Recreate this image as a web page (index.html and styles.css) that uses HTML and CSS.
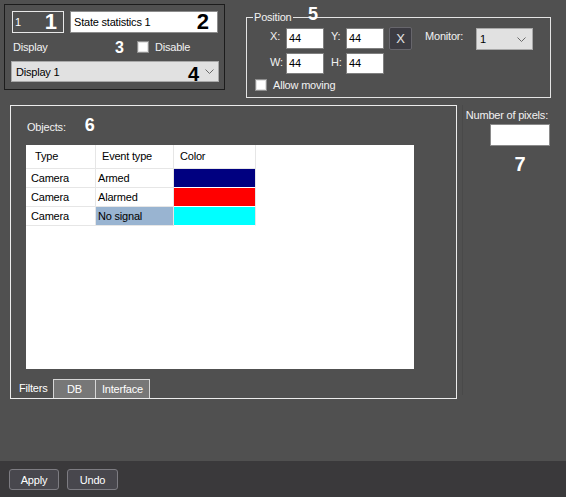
FILE: index.html
```html
<!DOCTYPE html>
<html lang="en">
  <head>
    <meta charset="UTF-8" />
    <meta name="viewport" content="width=device-width, initial-scale=1.0" />
    <title>State statistics</title>
    <link rel="stylesheet" href="styles.css">
  </head>
  <body>
    <div class="window">
      <div class="top">
        <div class="ident">
          <div class="ident__row">
            <div class="field field--id">1<span class="mark mark--lg">1</span></div>
            <div class="field field--name">State statistics 1<span class="mark mark--lg mark--dark">2</span></div>
          </div>
          <div class="ident__row ident__row--display">
            <span class="display-label">Display</span>
            <span class="mark-cell"><span class="mark mark--sm">3</span></span>
            <span class="check"></span>
            <span class="check-label">Disable</span>
          </div>
          <div class="combo combo--display">
            <span>Display 1</span>
            <span class="mark mark--md mark--dark mark--combo">4</span>
            <svg class="chevron" width="9" height="5" viewBox="0 0 9 5"><path d="M0.5 0.5 L4.5 4.5 L8.5 0.5" fill="none" stroke="#6a6a6a" stroke-width="1"/></svg>
          </div>
        </div>

        <div class="position">
          <span class="position__legend">Position</span>
          <span class="mark mark--pos">5</span>
          <div class="position__row position__row--main">
            <span class="coord-label">X:</span>
            <div class="num">44</div>
            <span class="coord-label coord-label--second">Y:</span>
            <div class="num">44</div>
            <button class="reset">X</button>
            <span class="monitor-label">Monitor:</span>
            <div class="combo combo--monitor">
              <span>1</span>
              <svg class="chevron" width="9" height="5" viewBox="0 0 9 5"><path d="M0.5 0.5 L4.5 4.5 L8.5 0.5" fill="none" stroke="#6a6a6a" stroke-width="1"/></svg>
            </div>
          </div>
          <div class="position__row position__row--size">
            <span class="coord-label">W:</span>
            <div class="num">44</div>
            <span class="coord-label coord-label--second">H:</span>
            <div class="num">44</div>
          </div>
          <div class="position__row position__row--moving">
            <span class="check"></span>
            <span class="check-label">Allow moving</span>
          </div>
        </div>
      </div>

      <div class="middle">
        <div class="objects">
          <div class="objects__head">
            <span>Objects:</span>
            <span class="mark mark--six">6</span>
          </div>
          <div class="grid">
            <table class="events">
              <colgroup>
                <col class="col-type">
                <col class="col-event">
                <col class="col-color">
              </colgroup>
              <tr>
                <th>Type</th>
                <th>Event type</th>
                <th>Color</th>
              </tr>
              <tr>
                <td>Camera</td>
                <td>Armed</td>
                <td class="swatch swatch--armed"></td>
              </tr>
              <tr>
                <td>Camera</td>
                <td>Alarmed</td>
                <td class="swatch swatch--alarmed"></td>
              </tr>
              <tr>
                <td>Camera</td>
                <td class="selected">No signal</td>
                <td class="swatch swatch--nosignal"></td>
              </tr>
            </table>
          </div>
          <div class="tabs">
            <span class="tab tab--active">Filters</span>
            <span class="tab tab--db">DB</span>
            <span class="tab tab--interface">Interface</span>
          </div>
        </div>
        <div class="splitter"></div>
        <div class="pixels">
          <span class="pixels__label">Number of pixels:</span>
          <div class="pixels__input"></div>
          <div class="mark mark--seven">7</div>
        </div>
      </div>

      <div class="footer">
        <button class="btn">Apply</button>
        <button class="btn btn--undo">Undo</button>
      </div>
    </div>
  </body>
</html>
```

FILE: styles.css
```css
* {
  margin: 0;
  padding: 0;
  box-sizing: border-box;
}
body {
  background-color: #505050;
  font-family: "Liberation Sans", Arial, sans-serif;
  font-size: 11px;
  letter-spacing: -0.2px;
  color: #f2f2f2;
}
.window {
  height: 497px;
  display: flex;
  flex-direction: column;
  overflow: hidden;
}

/* numbered callouts */
.mark {
  font-weight: bold;
  color: #fff;
  letter-spacing: 0;
}
.mark--dark {
  color: #000;
}
.mark--lg {
  font-size: 22px;
  line-height: 22px;
}
.mark--md {
  font-size: 20px;
  line-height: 20px;
}
.mark--sm {
  font-size: 16px;
  line-height: 16px;
}

/* top row */
.top {
  display: flex;
  align-items: flex-start;
  padding: 4px 0 0 4px;
}
.ident {
  width: 221px;
  height: 86px;
  border: 1px solid #1c1c1c;
  padding: 6px 0 0 6px;
}
.ident__row {
  display: flex;
}
.field {
  height: 22px;
  display: flex;
  align-items: center;
  justify-content: space-between;
  line-height: 13px;
}
.field--id {
  width: 52px;
  margin-left: 1px;
  border: 1px solid #e8e8e8;
  padding: 0 6px 0 2px;
  color: #fff;
}
.field--name {
  width: 148px;
  margin-left: 6px;
  background-color: #fff;
  border: 1px solid #8c8c8c;
  padding: 0 8px 0 3px;
  color: #000;
}
.ident__row--display {
  height: 28px;
  align-items: center;
}
.display-label {
  width: 104px;
  padding-left: 2px;
}
.mark-cell {
  width: 22px;
  display: flex;
  margin-top: 2px;
}
.check {
  width: 12px;
  height: 12px;
  background-color: #fff;
  border: 1px solid #8e8e8e;
  box-shadow: inset 0 0 0 1px #e2e2e2;
}
.check-label {
  margin-left: 6px;
}
.combo {
  display: flex;
  align-items: center;
  background-color: #e1e1e1;
  border: 1px solid #a9a9a9;
  color: #000;
}
.combo--display {
  width: 208px;
  height: 21px;
  padding: 0 4px 0 4px;
}
.mark--combo {
  margin-left: auto;
  margin-top: 4px;
}
.chevron {
  margin-left: 6px;
  flex-shrink: 0;
}

.position {
  position: relative;
  width: 305px;
  height: 81px;
  margin: 13px 0 0 21px;
  border: 1px solid #e4e4e4;
  padding-top: 9px;
}
.position__legend {
  position: absolute;
  left: 6px;
  top: -7px;
  padding: 0 1px;
  line-height: 13px;
  background-color: #505050;
}
.mark--pos {
  position: absolute;
  left: 61px;
  top: -13px;
  font-size: 18px;
  line-height: 18px;
}
.position__row {
  display: flex;
  align-items: flex-start;
  padding-left: 23px;
}
.position__row--main {
  height: 23px;
}
.position__row--main .num {
  margin-top: 1px;
}
.position__row--size {
  margin-top: 3px;
}
.position__row--moving {
  margin-top: 4px;
  height: 14px;
  align-items: center;
  padding-left: 8px;
}
.coord-label {
  width: 16px;
  margin-top: 3px;
  line-height: 13px;
}
.coord-label--second {
  width: 15px;
  margin-left: 7px;
}
.num {
  width: 38px;
  height: 21px;
  background-color: #fff;
  border: 1px solid #7f7f7f;
  color: #000;
  padding-left: 2px;
  line-height: 19px;
}
.reset {
  width: 23px;
  height: 23px;
  margin-left: 5px;
  background-color: #3c3b42;
  border: 1px solid #67666c;
  border-radius: 2px;
  color: #e4e4e4;
  font-family: inherit;
  font-size: 13px;
}
.monitor-label {
  width: 51px;
  margin: 3px 0 0 13px;
  line-height: 13px;
}
.combo--monitor {
  width: 57px;
  height: 22px;
  margin-top: 1px;
  padding: 0 6px 0 3px;
  justify-content: space-between;
}

/* objects */
.middle {
  flex: 1;
  display: flex;
  align-items: flex-start;
  padding-top: 7px;
}
.objects {
  width: 447px;
  height: 294px;
  margin-left: 10px;
  border: 1px solid #ececec;
  display: flex;
  flex-direction: column;
}
.objects__head {
  height: 39px;
  padding: 10px 0 0 16px;
  display: flex;
  align-items: baseline;
  line-height: 13px;
}
.mark--six {
  margin-left: 19px;
  font-size: 18px;
  line-height: 18px;
}
.grid {
  width: 388px;
  height: 224px;
  margin-left: 15px;
  background-color: #fff;
}
.events {
  table-layout: fixed;
  width: 230px;
  border-collapse: separate;
  border-spacing: 0;
  color: #000;
}
.col-type {
  width: 70px;
}
.col-event {
  width: 78px;
}
.col-color {
  width: 82px;
}
.events th,
.events td {
  border-right: 1px solid #e6e6e6;
  border-bottom: 1px solid #e6e6e6;
  text-align: left;
  font-weight: normal;
  white-space: nowrap;
  line-height: 13px;
}
.events th {
  height: 24px;
  padding-left: 6px;
}
.events th:first-child {
  padding-left: 9px;
}
.events td {
  height: 19px;
  padding-left: 2px;
}
.events td:first-child {
  padding-left: 5px;
}
.events .selected {
  background-color: #99b4d1;
}
.events .swatch {
  border-bottom-color: #fff;
}
.swatch--armed {
  background-color: #000080;
}
.swatch--alarmed {
  background-color: #ff0000;
}
.swatch--nosignal {
  background-color: #00ffff;
}
.tabs {
  margin-top: 10px;
  height: 19px;
  display: flex;
  align-items: flex-end;
}
.tab {
  height: 19px;
  line-height: 18px;
  text-align: center;
  color: #fff;
}
.tab--active {
  width: 42px;
  padding-left: 8px;
  text-align: left;
}
.tab--db,
.tab--interface {
  background-color: #777;
  border: 1px solid #d6d6d6;
  border-bottom: none;
}
.tab--db {
  width: 43px;
}
.tab--interface {
  width: 54px;
  border-left: none;
}

.splitter {
  width: 1px;
  height: 290px;
  margin-left: 5px;
  background-color: #494949;
}
.pixels {
  flex: 1;
  display: flex;
  flex-direction: column;
  align-items: flex-end;
  padding: 4px 16px 0 0;
}
.pixels__label {
  line-height: 13px;
  margin-right: 2px;
}
.pixels__input {
  width: 60px;
  height: 22px;
  margin-top: 2px;
  background-color: #fff;
  border: 1px solid #8a8a8a;
}
.mark--seven {
  width: 60px;
  margin-top: 8px;
  text-align: center;
  font-size: 20px;
  line-height: 20px;
}

/* footer */
.footer {
  height: 36px;
  background-color: #3a393b;
  padding: 8px 0 0 9px;
  display: flex;
  align-items: flex-start;
}
.btn {
  width: 50px;
  height: 21px;
  background-color: #48474d;
  border: 1px solid #7d7c82;
  border-radius: 3px;
  color: #fff;
  font-family: inherit;
  font-size: 11px;
  letter-spacing: -0.2px;
}
.btn--undo {
  width: 51px;
  margin-left: 8px;
}
```
